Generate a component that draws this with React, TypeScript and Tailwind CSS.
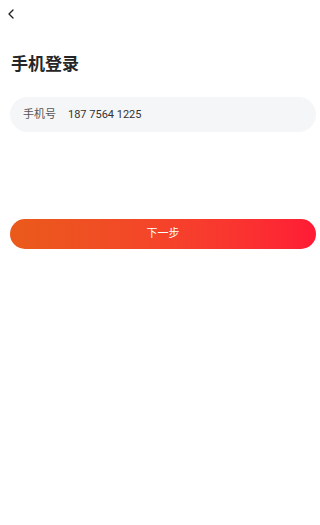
import { ChevronLeft } from 'lucide-react';

export default function App() {
  return (
    <div className="min-h-[525px] w-full bg-white font-['Roboto','Noto_Sans_CJK_SC',sans-serif]">
      <div className="flex h-[26px] items-center pl-[3px] pt-[1px]">
        <ChevronLeft className="h-[16px] w-[16px] text-[#222]" strokeWidth={2} />
      </div>

      <h1 className="mt-[26px] pl-[11px] text-[17px] leading-[24px] font-bold text-[#262626]">手机登录</h1>

      <div className="ml-[10px] mt-[21px] flex h-[35px] w-[306px] items-center rounded-full bg-[#f5f6f8] px-[13px] pt-[2px] text-[11px]">
        <span className="w-[45px] text-[#555]">手机号</span>
        <span className="text-[#333]">187 7564 1225</span>
      </div>

      <button className="ml-[10px] mt-[87px] flex h-[30px] w-[306px] items-center justify-center rounded-full bg-gradient-to-r from-[#ea5a1a] to-[#ff1a35] pt-[1px] text-[11px] text-white">
        下一步
      </button>
    </div>
  );
}
